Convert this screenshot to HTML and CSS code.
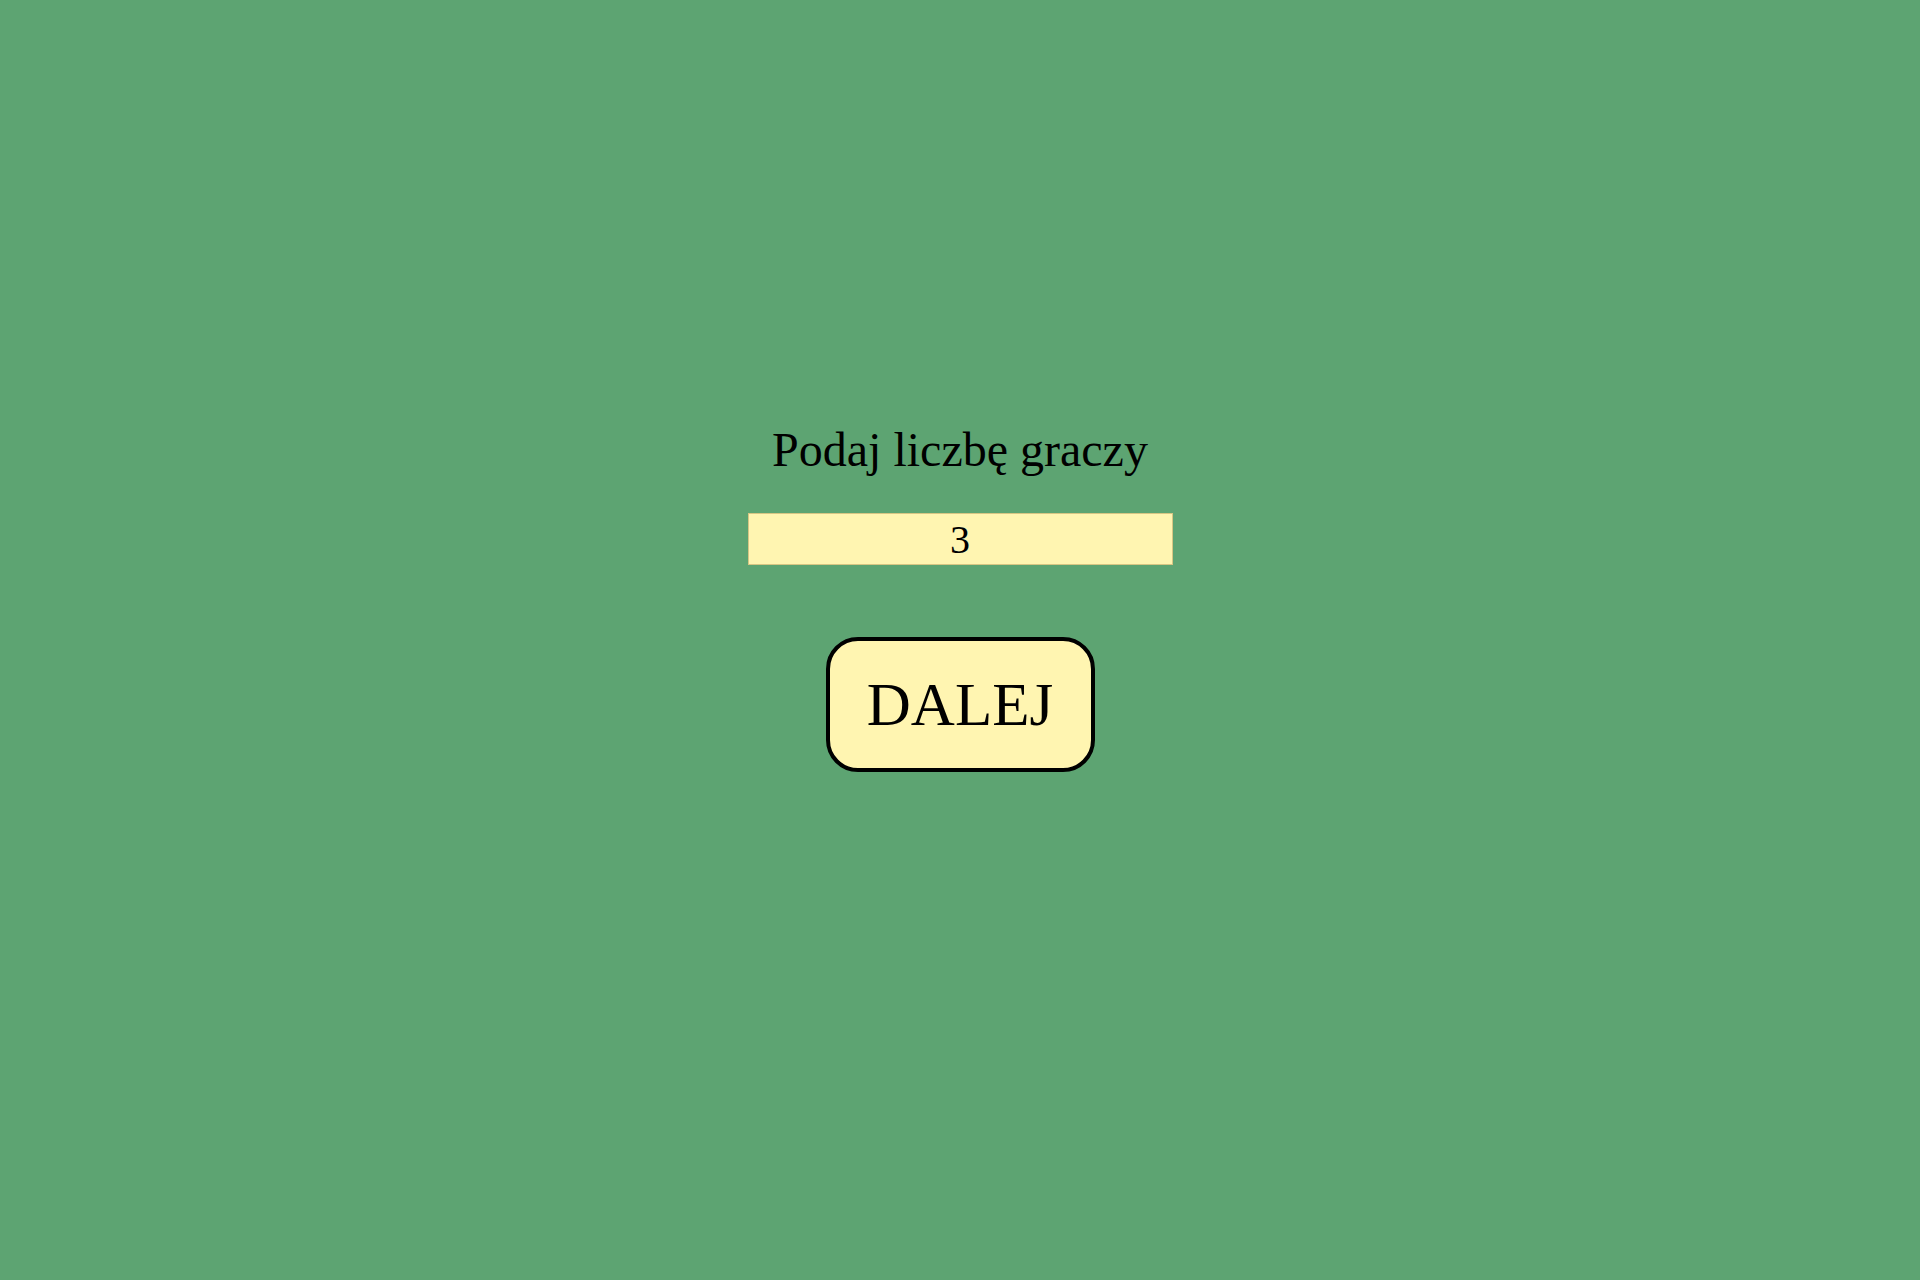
FILE: index.html
```html
<!DOCTYPE html>
<html lang="pl">
<head>
<meta charset="utf-8">
<title>Gra</title>
<link rel="stylesheet" href="styles.css">
</head>
<body>
<main class="screen">
  <h1 class="prompt">Podaj liczbę graczy</h1>
  <input class="count" type="text" value="3">
  <button class="next" type="button">DALEJ</button>
</main>
</body>
</html>
```
FILE: styles.css
```css
html, body {
  margin: 0;
  padding: 0;
  height: 100%;
}
body {
  background: #5da472;
  font-family: "Liberation Serif", "Times New Roman", serif;
  color: #000;
}
.screen {
  display: flex;
  flex-direction: column;
  align-items: center;
  padding-top: 420px;
}
.prompt {
  margin: 0;
  font-weight: normal;
  font-size: 48px;
  line-height: 60px;
}
.count {
  box-sizing: border-box;
  margin-top: 33px;
  width: 425px;
  height: 52px;
  border: 1px solid #d7c684;
  background: #fff5b1;
  text-align: center;
  font-family: "Liberation Serif", "Times New Roman", serif;
  font-size: 40px;
  padding: 0;
  outline: none;
}
.next {
  box-sizing: border-box;
  margin-top: 72px;
  width: 269px;
  height: 135px;
  border: 4px solid #000;
  border-radius: 32px;
  background: #fff5b1;
  font-family: "Liberation Serif", "Times New Roman", serif;
  font-size: 61px;
  padding: 0;
  color: #000;
}
```
